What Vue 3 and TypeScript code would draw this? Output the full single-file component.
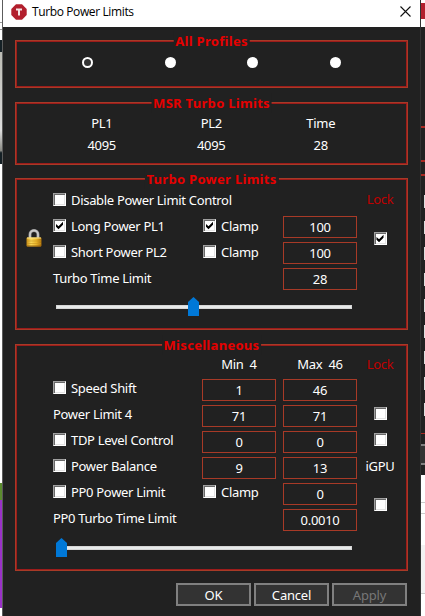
<script setup lang="ts">
import { ref } from 'vue'

interface MiscRow {
  label: string
  check: boolean
  min?: string
  max: string
  clamp?: boolean
}

const profiles = [0, 1, 2, 3]
const profile = ref(0)

const msr = [
  { name: 'PL1', value: '4095' },
  { name: 'PL2', value: '4095' },
  { name: 'Time', value: '28' },
]

const limits = [
  { label: 'Long Power PL1', on: true, clamp: true, value: '100' },
  { label: 'Short Power PL2', on: false, clamp: false, value: '100' },
]

const misc: MiscRow[] = [
  { label: 'Speed Shift', check: true, min: '1', max: '46' },
  { label: 'Power Limit 4', check: false, min: '71', max: '71' },
  { label: 'TDP Level Control', check: true, min: '0', max: '0' },
  { label: 'Power Balance', check: true, min: '9', max: '13' },
  { label: 'PP0 Power Limit', check: true, clamp: true, max: '0' },
  { label: 'PP0 Turbo Time Limit', check: false, max: '0.0010' },
]
</script>

<template>
  <div class="screen">
    <div class="edge left"><i class="s1" /><i class="s2" /><i class="s3" /><i class="s4" /><i class="s5" /><i class="s6" /><i class="s7" /></div>
    <main class="window">
      <header class="titlebar">
        <svg class="logo" width="16" height="16" viewBox="0 0 16 16">
          <path d="M5 .3h6L15.7 5v6L11 15.7H5L.3 11V5z" fill="#b21f2d" />
          <path d="M5 4.5h6v2H9v5H7v-5H5z" fill="#f5e6e6" />
        </svg>
        <span class="title">Turbo Power Limits</span>
        <svg class="close" width="11" height="11" viewBox="0 0 11 11">
          <path d="M.5.5l10 10M10.5.5l-10 10" stroke="#111" stroke-width="1.1" />
        </svg>
      </header>

      <section class="group profiles">
        <h2>All Profiles</h2>
        <span v-for="p in profiles" :key="p" class="radio" :class="{ on: profile === p }" @click="profile = p" />
      </section>

      <section class="group msr">
        <h2>MSR Turbo Limits</h2>
        <div v-for="m in msr" :key="m.name" class="stat">
          <span>{{ m.name }}</span>
          <span>{{ m.value }}</span>
        </div>
      </section>

      <section class="group turbo">
        <h2>Turbo Power Limits</h2>
        <div class="padlock">
          <svg width="16" height="18" viewBox="0 0 16 18">
            <defs>
              <linearGradient id="gold" x1="0" x2="1" y1="0" y2="0">
                <stop offset="0" stop-color="#c68a12" />
                <stop offset=".3" stop-color="#f8d858" />
                <stop offset=".65" stop-color="#e9b52a" />
                <stop offset="1" stop-color="#a86c08" />
              </linearGradient>
            </defs>
            <path d="M4 9V5.5a4 4 0 0 1 8 0V9" fill="none" stroke="#8b8b8b" stroke-width="3" />
            <path d="M4 9V5.5a4 4 0 0 1 8 0V9" fill="none" stroke="#c9c9c9" stroke-width="1.8" />
            <rect x=".5" y="8.5" width="15" height="9" rx="1" fill="url(#gold)" />
            <path d="M1 9h14" stroke="#ffe88a" />
            <path d="M1 12h14M1 14.5h14" stroke="#c89320" stroke-width=".6" />
            <path d="M1 17h14" stroke="#96610c" />
          </svg>
        </div>
        <div class="fields">
          <label class="name wide"><i class="box" /><span>Disable Power Limit Control</span></label>
          <span class="lock head">Lock</span>
          <template v-for="l in limits" :key="l.label">
            <label class="name"><i class="box" :class="{ on: l.on }" /><span>{{ l.label }}</span></label>
            <label class="clamp"><i class="box" :class="{ on: l.clamp }" /><span>Clamp</span></label>
            <div class="input">{{ l.value }}</div>
          </template>
          <span class="lock pair"><i class="box on" /></span>
          <span class="name wide">Turbo Time Limit</span>
          <div class="input">28</div>
        </div>
        <div class="slider"><i class="thumb mid" /></div>
      </section>

      <section class="group misc">
        <h2>Miscellaneous</h2>
        <div class="fields">
          <span class="corner" />
          <span class="col min">Min&nbsp; 4</span>
          <span class="col max">Max&nbsp; 46</span>
          <span class="lock head">Lock</span>
          <template v-for="r in misc" :key="r.label">
            <label class="name"><i v-if="r.check" class="box" /><span>{{ r.label }}</span></label>
            <div v-if="r.min" class="input min">{{ r.min }}</div>
            <label v-else-if="r.clamp" class="clamp"><i class="box" /><span>Clamp</span></label>
            <div class="input">{{ r.max }}</div>
          </template>
          <span class="lock r3"><i class="box" /></span>
          <span class="lock r4"><i class="box" /></span>
          <span class="lock r5">iGPU</span>
          <span class="lock r6"><i class="box" /></span>
        </div>
        <div class="slider"><i class="thumb" /></div>
      </section>

      <footer class="actions">
        <button>OK</button>
        <button>Cancel</button>
        <button disabled>Apply</button>
      </footer>
    </main>
    <div class="edge right"><i class="r1" /><i class="r2" /><i class="r3" /><i class="r4" /><i class="r5" /><i class="r6" /></div>
  </div>
</template>

<style>
body {
  overflow: hidden;
  background: #fff;
}
</style>

<style scoped>
* {
  box-sizing: border-box;
}
.screen {
  display: flex;
  width: 425px;
  height: 616px;
  font: 13px/18px "Noto Sans", sans-serif;
  letter-spacing: -0.31px;
  color: #fff;
}
.edge {
  display: flex;
  flex-direction: column;
  flex: none;
  background: #fff;
}
.left { width: 2px; }
.left .s1 { height: 22px; }
.left .s2 { height: 8px; border: solid #999; border-width: 1px 0; }
.left .s3 { height: 10px; }
.left .s4 { height: 12px; background: #152025; }
.left .s5 { height: 112px; background: linear-gradient(#bcbcb4, #ddd 70%, #8a8a84 88%, #152025 90%); }
.left .s6 { height: 17px; margin-top: 319px; background: #5b8c2e; }
.left .s7 { height: 108px; background: #9a32c8; }
.right { width: 4px; }
.right .r1 { height: 16px; margin-top: 3px; background: #b21f2d; }
.right .r2 {
  height: 407px;
  margin-top: 8px;
  background:
    linear-gradient(#a82822 0 0) 0 99px / 4px 2px no-repeat,
    linear-gradient(#a82822 0 0) 0 133px / 4px 2px no-repeat,
    linear-gradient(#a82822 0 0) 0 147px / 4px 2px no-repeat,
    linear-gradient(#a82822 0 0) 0 406px / 4px 2px no-repeat,
    repeating-linear-gradient(#ddd 0 13px, transparent 13px 26px) 3px 168px / 1px 221px no-repeat,
    #212121;
}
.right .r3 { height: 41px; background: #212121; border: solid #808080; border-width: 0; background: linear-gradient(#212121 10px, #808080 10px 12px, #333 12px 29px, #808080 29px 31px, #212121 31px); }
.right .r4 { height: 28px; border-bottom: 1px solid #ccc; }
.right .r5 { height: 11px; border-bottom: 1px solid #ccc; }
.right .r6 { height: 49px; margin-top: 31px; background: #f2f2f2; border-bottom: 1px solid #ccc; }

.window {
  width: 419px;
  flex: none;
  display: flex;
  flex-direction: column;
  background: #212121;
  border: solid #5c5c5c;
  border-width: 0 1px;
  border-right-color: #333;
}
.titlebar {
  height: 27px;
  flex: none;
  display: flex;
  align-items: center;
  padding: 0 9px 4px 8px;
  background: #fff;
  color: #000;
}
.title {
  margin-left: 5px;
  font: 12px/16px "Open Sans", sans-serif;
  letter-spacing: -0.38px;
}
.close {
  margin-left: auto;
}

.group {
  position: relative;
  flex: none;
  margin: 0 12px;
  width: 393px;
  border: 1px solid #a83a27;
  box-shadow: inset 0 0 0 1px #9c1c1b;
}
.group h2 {
  position: absolute;
  top: -10px;
  left: 50%;
  transform: translateX(-50%);
  margin: 0;
  padding: 0 2px;
  background: #212121;
  color: #e60000;
  font: bold 13px/20px "Noto Sans", sans-serif;
  letter-spacing: 0.3px;
  white-space: nowrap;
}
.profiles {
  height: 48px;
  margin-top: 13px;
  display: grid;
  grid-template-columns: repeat(4, 82.7px);
  justify-content: center;
  padding: 16px 0 0 0;
}
.radio {
  width: 11px;
  height: 11px;
  border-radius: 50%;
  background: #fff;
  justify-self: center;
}
.radio.on {
  background: #333;
  border: 2px solid #fff;
}
.msr {
  height: 63px;
  margin-top: 14px;
  padding: 11px 0 0 31px;
  display: grid;
  grid-template-columns: repeat(3, 109.5px);
}
.stat {
  display: grid;
  grid-auto-rows: 22px;
  text-align: center;
}
.turbo {
  height: 152px;
  margin-top: 13px;
  display: grid;
  grid-template-columns: 37px 350px;
  align-content: start;
  padding-top: 11px;
}
.padlock {
  padding: 39px 0 0 10px;
}
.fields {
  display: grid;
  grid-template-columns: 149px 81px 74px 46px;
  grid-auto-rows: 26px;
  align-items: start;
}
.name,
.clamp {
  display: flex;
  align-items: flex-start;
  white-space: nowrap;
  grid-column: 1;
}
.name.wide {
  grid-column: 1 / 3;
}
.clamp {
  grid-column: 2;
  padding-left: 1px;
}
.box {
  position: relative;
  width: 13px;
  height: 13px;
  flex: none;
  background: #fff;
  border: 1px solid;
  border-color: #a0a0a0 #fff #fff #a0a0a0;
  box-shadow: inset 1px 1px #696969, inset -1px -1px #e3e3e3;
}
.box.on::after {
  content: "";
  position: absolute;
  inset: 0;
  background: #000;
  clip-path: polygon(18% 36%, 41% 57%, 82% 17%, 82% 43%, 41% 84%, 18% 61%);
}
.box + span {
  margin-left: 5px;
}
.input {
  grid-column: 3;
  width: 74px;
  height: 22px;
  border: 1px solid #a83a27;
  text-align: center;
  line-height: 20px;
}
.input.min {
  grid-column: 2;
}
.lock {
  grid-column: 4;
  justify-self: center;
}
.head {
  color: #c00000;
}
.turbo .head {
  grid-row: 1;
}
.turbo .name .box,
.turbo .clamp .box {
  margin-top: 3px;
}
.turbo .fields > .name,
.turbo .fields > .clamp {
  line-height: 21px;
}
.pair {
  grid-row: 2 / 4;
  padding-top: 16px;
  line-height: 0;
}
.pair .box,
.r3 .box,
.r4 .box,
.r6 .box {
  display: block;
}
.turbo .slider {
  grid-column: 2;
  margin-top: 11px;
}
.slider {
  position: relative;
  margin-left: 3px;
  width: 296px;
  height: 4px;
  background: #e7eaea;
  border: 1px solid #d6d6d6;
}
.thumb {
  position: absolute;
  left: -1px;
  top: -9px;
  width: 11px;
  height: 19px;
  background: #0078d7;
  clip-path: polygon(50% 0, 100% 26%, 100% 100%, 0 100%, 0 26%);
}
.thumb.mid {
  left: 131px;
}
.misc {
  height: 227px;
  margin-top: 14px;
  padding: 10px 0 0 37px;
}
.misc .fields {
  grid-template-rows: 24px;
}
.misc .box {
  margin-top: 2px;
}
.misc .corner,
.misc .col,
.misc .head {
  grid-row: 1;
}
.corner {
  grid-column: 1;
  height: 24px;
}
.col {
  width: 74px;
  text-align: center;
}
.col.min { grid-column: 2; }
.col.max { grid-column: 3; }
.misc .lock.r3 { grid-row: 3; }
.misc .lock.r4 { grid-row: 4; }
.misc .lock.r5 { grid-row: 5; }
.misc .lock.r6 { grid-row: 6 / 8; padding-top: 13px; }
.misc .slider {
  margin-top: 11px;
}
.actions {
  display: flex;
  gap: 3px;
  justify-content: flex-end;
  padding: 12px 13px 0 0;
}
button {
  width: 75px;
  height: 23px;
  padding: 0;
  border: 2px solid #808080;
  background: #333;
  color: #fff;
  font: 13px/18px "Noto Sans", sans-serif;
  letter-spacing: -0.2px;
}
button:disabled {
  color: #777;
}
</style>
